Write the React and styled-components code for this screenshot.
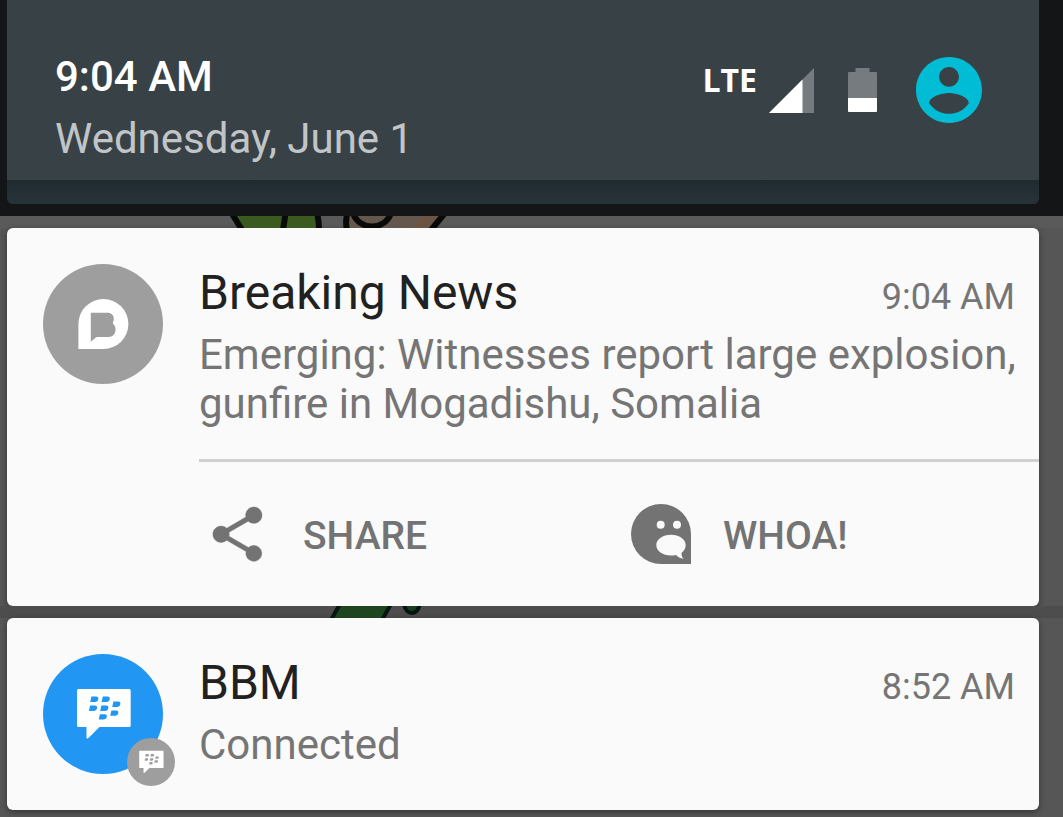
import React from "react";
import styled, { createGlobalStyle } from "styled-components";

const GlobalStyle = createGlobalStyle`
  * { box-sizing: border-box; }
  html { background: #565656; }
  body {
    margin: 0;
    font-family: Roboto, "Liberation Sans", sans-serif;
    color: #212121;
  }
  h2, p { margin: 0; font-weight: 400; }
`;

const Shade = styled.div`
  overflow: hidden;
`;

const StatusArea = styled.header`
  padding: 0 24px 12px 7px;
  background: #131516;
`;

const StatusPanel = styled.div`
  border-radius: 0 0 6px 6px;
  overflow: hidden;
  background: #263238;
`;

const StatusBar = styled.div`
  display: flex;
  justify-content: space-between;
  align-items: flex-start;
  padding: 46px 57px 10px 48px;
  background: #384246;
`;

const PanelEdge = styled.div`
  height: 24px;
  background: linear-gradient(#202b30, #263339);
`;

const Clock = styled.time`
  display: block;
  font-size: 42px;
  line-height: 62px;
  font-weight: 500;
  color: #fff;
`;

const DateLine = styled(Clock)`
  font-weight: 400;
  color: #c1c5c7;
`;

const StatusIcons = styled.div`
  display: flex;
  align-items: center;
  padding-top: 11px;
`;

const Network = styled.span`
  align-self: flex-start;
  margin-right: 12px;
  font: 700 32px/46px "Open Sans", sans-serif;
  color: #fff;
`;

const ProfileButton = styled.button`
  display: flex;
  margin-left: 39px;
  padding: 0;
  border: 0;
  border-radius: 50%;
  background: none;
  cursor: pointer;
`;

const Battery = styled.svg`
  margin-left: 34px;
`;

const Wallpaper = styled.div`
  height: 12px;
  overflow: hidden;
  background: ${(p) => p.$tone};
  svg { display: block; }
`;

const List = styled.main`
  padding-bottom: 12px;
`;

const Card = styled.article`
  display: flex;
  gap: 36px;
  min-height: 192px;
  margin: 0 24px 0 7px;
  padding-left: 36px;
  border-radius: 6px;
  background: #fafafa;
  box-shadow: 0 2px 6px rgba(0, 0, 0, 0.4);
`;

const Avatar = styled.div`
  position: relative;
  flex: none;
  display: flex;
  width: 120px;
  height: 120px;
  margin-top: 36px;
  border-radius: 50%;
  background: ${(p) => p.$color};
`;

const Badge = styled.span`
  position: absolute;
  right: -12px;
  bottom: -12px;
  display: flex;
  align-items: center;
  justify-content: center;
  width: 48px;
  height: 48px;
  border-radius: 50%;
  background: #9e9e9e;
`;

const Content = styled.div`
  flex: 1;
  min-width: 0;
  padding-top: 32px;
`;

const TitleRow = styled.div`
  display: flex;
  justify-content: space-between;
  align-items: baseline;
  padding-right: 24px;
  line-height: 66px;
`;

const Title = styled.h2`
  font-size: 48px;
`;

const Stamp = styled.time`
  font-size: 36px;
  color: #757575;
`;

const Message = styled.p`
  padding-right: 20px;
  font-size: 42px;
  line-height: 49px;
  color: #757575;
`;

const Actions = styled.div`
  display: grid;
  grid-template-columns: 1fr 1fr;
  margin-top: 31px;
  border-top: 3px solid #d0d0d0;
`;

const Action = styled.button`
  display: flex;
  align-items: center;
  gap: 32px;
  height: 144px;
  padding: 0 12px;
  border: 0;
  background: none;
  font: 500 39px/48px Roboto, sans-serif;
  color: #737373;
  cursor: pointer;
  svg { flex: none; }
`;

const ActionLabel = styled.span`
  padding-top: 4px;
`;

const Signal = () => (
  <svg width="45" height="45" viewBox="0 0 45 45" aria-hidden="true">
    <path d="M45 0V45H0Z" fill="#757b7f" />
    <path d="M33.500 11.500V45H0Z" fill="#fff" />
  </svg>
);

const BatteryIcon = () => (
  <Battery width="29" height="44" viewBox="0 0 29 44" aria-hidden="true">
    <path d="M7.500 0h14v4H28q1 0 1 1v25H0V5q0-1 1-1h6.500z" fill="#757b7f" />
    <path d="M0 30h29v13q0 1-1 1H1q-1 0-1-1z" fill="#fff" />
  </Battery>
);

const Profile = () => (
  <svg width="66" height="66" viewBox="2 2 20 20" aria-hidden="true">
    <path
      fill="#00bcd4"
      d="M12 2C6.48 2 2 6.48 2 12s4.48 10 10 10 10-4.48 10-10S17.52 2 12 2zm0 3c1.66 0 3 1.34 3 3s-1.34 3-3 3-3-1.34-3-3 1.34-3 3-3zm0 14.2c-2.5 0-4.71-1.28-6-3.22.03-1.99 4-3.08 6-3.08 1.99 0 5.97 1.09 6 3.08-1.29 1.94-3.5 3.22-6 3.22z"
    />
  </svg>
);

const BreakingMark = () => (
  <svg width="120" height="120" viewBox="0 0 120 120" aria-hidden="true">
    <path
      fill="#fff"
      fillRule="evenodd"
      d="M35.4 85V60a25 25 0 1 1 25 25zM47.8 48.7v29l5-4.3q.8-.5 1.7-.5h11c4.2 0 7-3 7-7.2 0-2.300-.6-4-2.200-5.600-.7-.8-.6-1.700-.1-2.600.4-.8.6-1.500.6-2.600 0-3.700-2.500-6.200-6.300-6.200z"
    />
  </svg>
);

const BLOCKS = [
  [47, 42.6], [58.4, 42.6],
  [45.7, 51.6], [57, 51.6],
  [69, 47.6], [67, 56.4],
  [55.5, 60.2],
];

const BbmMark = ({ ink, ...rest }) => (
  <svg viewBox="0 0 120 120" aria-hidden="true" {...rest}>
    <path
      fill="#fff"
      d="M35.500 35H86.200q1.500 0 1.500 1.500V71.500q0 1.500-1.500 1.500H56.500L45.200 84.200q-1.700 1-1.700-.8V73h-8q-1.500 0-1.500-1.500V36.500q0-1.500 1.500-1.500z"
    />
    {BLOCKS.map(([x, y]) => (
      <path
        key={`${x}-${y}`}
        transform={`translate(${x} ${y})`}
        fill={ink}
        d="M1.400 0H6.200C8 0 8.600 1.200 8.300 2.600 8 4.400 6.700 5.400 5 5.400H.2z"
      />
    ))}
  </svg>
);

const ShareIcon = () => (
  <svg width="60" height="60" viewBox="2.3 0.9 22 22" aria-hidden="true">
    <path
      fill="currentColor"
      d="M18 16.080c-.76 0-1.440.3-1.960.77L8.910 12.700c.05-.23.09-.46.09-.7s-.04-.47-.09-.7l7.050-4.110c.54.5 1.250.81 2.040.81 1.660 0 3-1.340 3-3s-1.340-3-3-3-3 1.340-3 3c0 .24.04.47.09.7L8.040 9.810C7.500 9.310 6.790 9 6 9c-1.660 0-3 1.340-3 3s1.340 3 3 3c.79 0 1.500-.31 2.040-.81l7.120 4.160c-.05.21-.08.43-.08.65 0 1.610 1.310 2.920 2.920 2.920 1.610 0 2.920-1.310 2.920-2.920s-1.310-2.920-2.920-2.920z"
      stroke="currentColor"
      strokeWidth="0.15"
    />
  </svg>
);

const WhoaIcon = () => (
  <svg width="60" height="60" viewBox="0 0 60 60" aria-hidden="true">
    <path d="M60 60H30A30 30 0 1 1 60 30z" fill="currentColor" />
    <circle cx="29.700" cy="20.700" r="4" fill="#fafafa" />
    <circle cx="46" cy="20.700" r="4" fill="#fafafa" />
    <path
      fill="#fafafa"
      d="M40 30.700c8.200 0 14.700 4.300 14.700 10.400 0 3.500-1.700 6-4.200 7.800 0 2.300.4 4 1.900 5.900-3.100-.6-5.500-1.700-7.200-3.900-1.700.4-3.400.6-5.200.6-8.200 0-14.700-4.300-14.700-10.400S31.800 30.700 40 30.700z"
    />
  </svg>
);

const UpperArt = () => (
  <svg width="240" height="12" viewBox="229 216 240 12" aria-hidden="true">
    <path d="M234 216H318V228H243z" fill="#3b5a20" />
    <path d="M347 216H442L433 228H347z" fill="#64574e" />
    <path d="M422 216H442L433 228H412z" fill="#6c5444" />
    <g fill="none" stroke="#080a08" strokeWidth="6">
      <path d="M231 212L242 230M285.500 214L283 230M317 213Q319 221 319 230M347.500 213Q345 221 347 230M353 213C359 231 385 231 391 213M445 213L431 230" />
    </g>
  </svg>
);

const LowerArt = () => (
  <svg width="100" height="12" viewBox="327 606 100 12" aria-hidden="true">
    <path d="M338 606H391L382 618H333z" fill="#1e4520" />
    <path d="M404 606H419C416 615 407 615 404 606" fill="#1b3d22" />
    <g fill="none" stroke="#051512" strokeWidth="4">
      <path d="M340 604L331 620M391 604L382 620M404 604C406 616 417 616 420 604" />
    </g>
  </svg>
);

const UpperBackdrop = styled(Wallpaper)`
  padding-left: 229px;
`;

const LowerBackdrop = styled(Wallpaper)`
  padding-left: 327px;
`;

function Notification({ avatar, title, time, message, children }) {
  return (
    <Card>
      {avatar}
      <Content>
        <TitleRow>
          <Title>{title}</Title>
          <Stamp>{time}</Stamp>
        </TitleRow>
        <Message>{message}</Message>
        {children}
      </Content>
    </Card>
  );
}

export default function App() {
  return (
    <Shade>
      <GlobalStyle />
      <StatusArea>
        <StatusPanel>
          <StatusBar>
            <div>
              <Clock>9:04 AM</Clock>
              <DateLine>Wednesday, June 1</DateLine>
            </div>
            <StatusIcons>
              <Network>LTE</Network>
              <Signal />
              <BatteryIcon />
              <ProfileButton aria-label="Profile">
                <Profile />
              </ProfileButton>
            </StatusIcons>
          </StatusBar>
          <PanelEdge />
        </StatusPanel>
      </StatusArea>
      <List>
        <UpperBackdrop $tone="#5a5a5a">
          <UpperArt />
        </UpperBackdrop>
        <Notification
          avatar={
            <Avatar $color="#9e9e9e">
              <BreakingMark />
            </Avatar>
          }
          title="Breaking News"
          time="9:04 AM"
          message="Emerging: Witnesses report large explosion, gunfire in Mogadishu, Somalia"
        >
          <Actions>
            <Action>
              <ShareIcon />
              <ActionLabel>SHARE</ActionLabel>
            </Action>
            <Action>
              <WhoaIcon />
              <ActionLabel>WHOA!</ActionLabel>
            </Action>
          </Actions>
        </Notification>
        <LowerBackdrop $tone="#4d4d4d">
          <LowerArt />
        </LowerBackdrop>
        <Notification
          avatar={
            <Avatar $color="#2196f3">
              <BbmMark ink="#2196f3" width="120" height="120" />
              <Badge>
                <BbmMark ink="#9e9e9e" width="48" height="48" viewBox="7 7 106 106" />
              </Badge>
            </Avatar>
          }
          title="BBM"
          time="8:52 AM"
          message="Connected"
        />
      </List>
    </Shade>
  );
}
